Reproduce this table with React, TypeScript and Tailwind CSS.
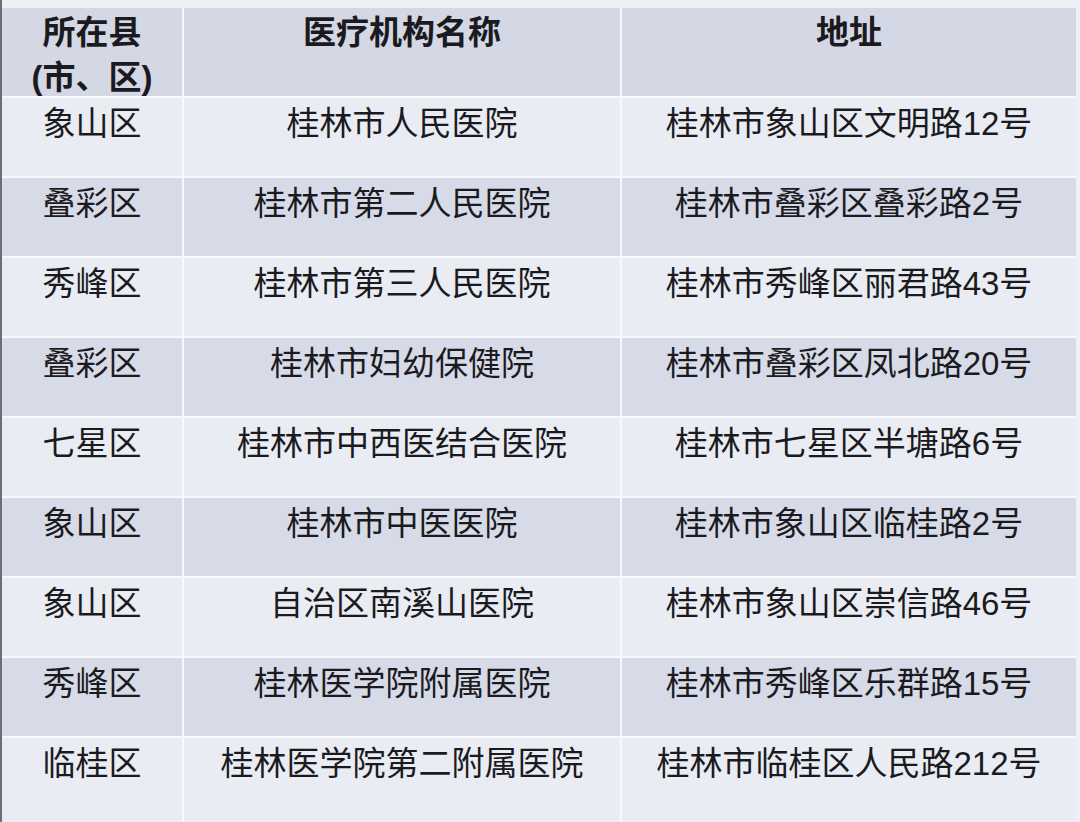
const rows = [
  ["象山区", "桂林市人民医院", "桂林市象山区文明路12号"],
  ["叠彩区", "桂林市第二人民医院", "桂林市叠彩区叠彩路2号"],
  ["秀峰区", "桂林市第三人民医院", "桂林市秀峰区丽君路43号"],
  ["叠彩区", "桂林市妇幼保健院", "桂林市叠彩区凤北路20号"],
  ["七星区", "桂林市中西医结合医院", "桂林市七星区半塘路6号"],
  ["象山区", "桂林市中医医院", "桂林市象山区临桂路2号"],
  ["象山区", "自治区南溪山医院", "桂林市象山区崇信路46号"],
  ["秀峰区", "桂林医学院附属医院", "桂林市秀峰区乐群路15号"],
  ["临桂区", "桂林医学院第二附属医院", "桂林市临桂区人民路212号"],
];

export default function App() {
  return (
    <div
      className="h-[822px] overflow-hidden bg-[#eef0f5] border-l-2 border-[#6a6e78] pt-[8px] pr-[4px] text-[#1b1b1f]"
      style={{ fontFamily: '"Liberation Sans", "Noto Sans CJK SC", sans-serif' }}
    >
      <div className="grid grid-cols-[180px_436px_454px] gap-[2px] bg-[#f7f8fb] text-[33px] leading-[44px] text-center">
        {/* header */}
        <div className="bg-[#d4d8e5] h-[88px] pt-[2px] font-bold leading-[45px]">
          <div>所在县</div>
          <div>(市、区)</div>
        </div>
        <div className="bg-[#d4d8e5] h-[88px] pt-[2px] font-bold leading-[45px]">医疗机构名称</div>
        <div className="bg-[#d4d8e5] h-[88px] pt-[2px] font-bold leading-[45px]">地址</div>

        {rows.map((row, i) => {
          const bg = i % 2 === 0 ? "bg-[#e9ecf2]" : "bg-[#d7dae7]";
          const h = i === rows.length - 1 ? "h-[100px]" : "h-[78px]";
          return row.map((cell, j) => (
            <div key={`${i}-${j}`} className={`${bg} ${h} pt-[4px] whitespace-nowrap`}>
              {cell}
            </div>
          ));
        })}
      </div>
    </div>
  );
}
